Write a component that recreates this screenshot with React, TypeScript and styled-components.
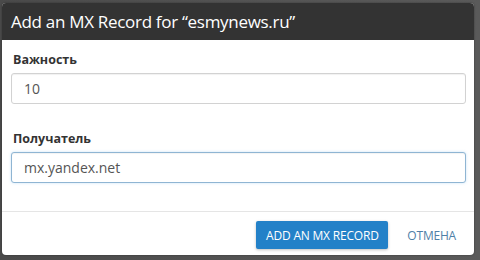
import React from "react";
import styled, { createGlobalStyle } from "styled-components";

const Global = createGlobalStyle`
  html, body { margin: 0; padding: 0; background: #505050; }
  body { font-family: "Open Sans", "Noto Sans", sans-serif; }
  * { box-sizing: border-box; }
`;

const Backdrop = styled.div`
  width: 480px;
  height: 260px;
  padding: 3px 0 0 2px;
  background: linear-gradient(90deg, #4a4a4a, #555 60%, #5a5a5a);
`;

const Modal = styled.div`
  width: 472px;
  height: 252px;
  background: #fff;
  border-radius: 4px;
  overflow: hidden;
  display: flex;
  flex-direction: column;
  box-shadow: 0 0 2px rgba(0, 0, 0, 0.4);
`;

const Header = styled.div`
  height: 37px;
  flex: none;
  background: #333;
  display: flex;
  align-items: center;
  padding: 0 9px;
`;

const Title = styled.h4`
  margin: 0;
  color: #fff;
  font-size: 17px;
  font-weight: 400;
  letter-spacing: -0.3px;
`;

const Body = styled.div`
  padding: 11px 7px 28px 9px;
  display: flex;
  flex-direction: column;
`;

const Field = styled.div<{ $gap?: number }>`
  display: flex;
  flex-direction: column;
  margin-top: ${(p) => p.$gap ?? 0}px;
`;

const Label = styled.label`
  font-size: 12.5px;
  line-height: 18px;
  font-weight: 700;
  color: #333;
  margin-bottom: 4px;
  padding-left: 2px;
`;

const Input = styled.input<{ $focused?: boolean }>`
  height: 31px;
  width: 455px;
  border: 1px solid ${(p) => (p.$focused ? "#8fb5d3" : "#d2d2d2")};
  border-radius: 3px;
  padding: 0 12px;
  font-family: "Open Sans", "Noto Sans", sans-serif;
  font-size: 14px;
  color: #555;
  background: #fff;
  box-shadow: ${(p) =>
    p.$focused
      ? "inset 0 1px 1px rgba(0,0,0,.05), 0 0 3px rgba(102,175,233,.35)"
      : "inset 0 1px 1px rgba(0,0,0,.06)"};
  outline: none;
`;

const Footer = styled.div`
  border-top: 1px solid #e5e5e5;
  flex: 1;
  display: flex;
  justify-content: flex-end;
  align-items: flex-start;
  padding: 9px 18px 0 0;
  gap: 19px;
`;

const PrimaryButton = styled.button`
  height: 28px;
  width: 132px;
  border: none;
  border-radius: 2px;
  background: #2381c8;
  color: #fff;
  font-family: "Open Sans", "Noto Sans", sans-serif;
  font-size: 12px;
  text-transform: uppercase;
  letter-spacing: -0.2px;
  box-shadow: 0 1px 3px rgba(0, 0, 0, 0.25);
  cursor: pointer;
`;

const LinkButton = styled.button`
  height: 28px;
  border: none;
  background: transparent;
  padding: 0;
  color: #4f7fa7;
  font-family: "Open Sans", "Noto Sans", sans-serif;
  font-size: 12px;
  text-transform: uppercase;
  letter-spacing: -0.2px;
  cursor: pointer;
`;

export default function App() {
  return (
    <>
      <Global />
      <Backdrop>
        <Modal>
          <Header>
            <Title>Add an MX Record for “esmynews.ru”</Title>
          </Header>
          <Body>
            <Field>
              <Label>Важность</Label>
              <Input defaultValue="10" />
            </Field>
            <Field $gap={26}>
              <Label>Получатель</Label>
              <Input $focused defaultValue="mx.yandex.net" />
            </Field>
          </Body>
          <Footer>
            <PrimaryButton>Add an MX Record</PrimaryButton>
            <LinkButton>Отмена</LinkButton>
          </Footer>
        </Modal>
      </Backdrop>
    </>
  );
}
